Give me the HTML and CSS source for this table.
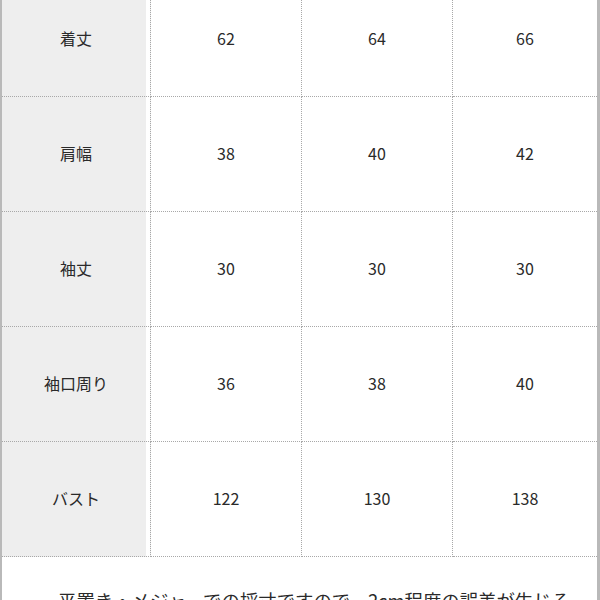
FILE: index.html
```html
<!DOCTYPE html>
<html lang="ja">
<head>
<meta charset="utf-8">
<link rel="stylesheet" href="styles.css">
</head>
<body>
<div class="sheet">
  <div class="grid">
    <div class="cell label">着丈</div><div class="cell">62</div><div class="cell">64</div><div class="cell last">66</div>
    <div class="cell label">肩幅</div><div class="cell">38</div><div class="cell">40</div><div class="cell last">42</div>
    <div class="cell label">袖丈</div><div class="cell">30</div><div class="cell">30</div><div class="cell last">30</div>
    <div class="cell label">袖口周り</div><div class="cell">36</div><div class="cell">38</div><div class="cell last">40</div>
    <div class="cell label">バスト</div><div class="cell">122</div><div class="cell">130</div><div class="cell last">138</div>
    <div class="note">平置き・メジャーでの採寸ですので、2cm程度の誤差が生じる場合があります。</div>
  </div>
</div>
</body>
</html>
```
FILE: styles.css
```css
html, body {
  margin: 0;
  padding: 0;
  background: #fff;
  overflow: hidden;
}
body {
  font-family: "Noto Sans CJK JP", "Noto Sans", sans-serif;
  color: #2a2a2a;
}
.sheet {
  border-left: 2px solid #b9b9b9;
  border-right: 3px solid #b9b9b9;
  margin-top: -18px;
  min-height: 680px;
}
.grid {
  display: grid;
  grid-template-columns: 149px 151px 151px 1fr;
  grid-auto-rows: 115px;
}
.cell {
  box-sizing: border-box;
  border-right: 1px dotted #a8a8a8;
  border-bottom: 1px dotted #a8a8a8;
  display: flex;
  align-items: center;
  justify-content: center;
  font-size: 16px;
  line-height: 1;
  padding-bottom: 3px;
}
.cell.last {
  border-right: none;
}
.label {
  background: linear-gradient(to right, #eeeeee calc(100% - 4px), #ffffff 0);
}
.note {
  grid-column: 1 / -1;
  padding: 30px 10px 0 56px;
  font-size: 18.4px;
  line-height: 1.5;
}
```
